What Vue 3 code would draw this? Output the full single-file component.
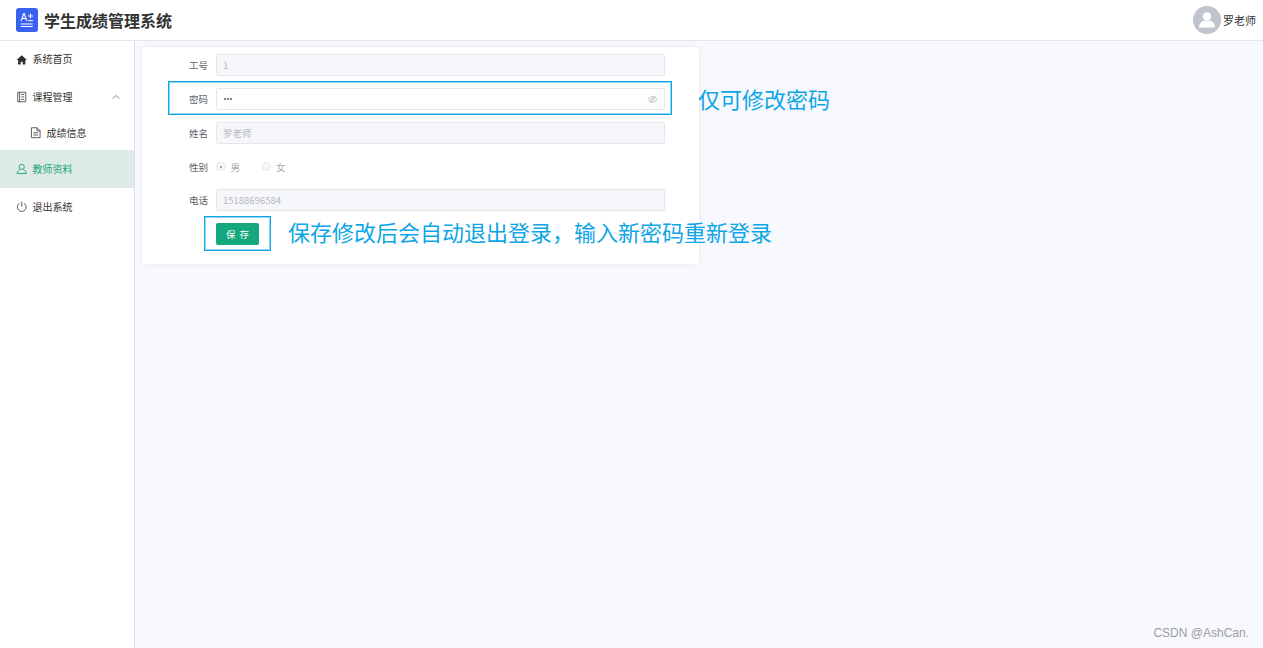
<template>
  <div class="layout">
    <header class="topbar">
      <div class="brand">
        <svg class="logo" viewBox="0 0 22 24">
          <rect width="22" height="24" rx="3" fill="#3861f0" />
          <text x="4.500" y="12.800" class="logo-a">A</text>
          <path d="M12 12.700h5M14.500 5.500v5M12 8h5M4.700 16h12M4.700 18.500h12" stroke="#fff" stroke-width="1" fill="none" />
        </svg>
        <span class="brand-name">学生成绩管理系统</span>
      </div>
      <div class="user">
        <svg class="avatar" viewBox="0 0 28 28">
          <circle cx="14" cy="14" r="14" fill="#c0c4cc" />
          <circle cx="14" cy="10.500" r="4.200" fill="#fff" />
          <path d="M6 21.500c0-4.500 3.200-6.500 5.200-7 1.800 1 3.800 1 5.600 0 2 .5 5.200 2.500 5.200 7z" fill="#fff" />
        </svg>
        <span>罗老师</span>
      </div>
    </header>

    <div class="body">
      <aside class="sidebar">
        <div v-for="item in menu" :key="item.name" class="menu-item" :class="item.cls">
          <svg class="menu-icon" viewBox="0 0 12 12" v-html="item.icon"></svg>
          <span class="menu-text">{{ item.name }}</span>
          <svg v-if="item.arrow" class="arrow" viewBox="0 0 10 10">
            <path d="M1.500 6.500 5 3.500l3.500 3" fill="none" stroke="#777" stroke-width=".8" />
          </svg>
        </div>
      </aside>

      <main class="main">
        <div class="card">
          <div class="row">
            <label>工号</label>
            <div class="input disabled">1</div>
          </div>
          <div class="row">
            <label>密码</label>
            <div class="input password">
              <span class="dots"><i></i><i></i><i></i></span>
              <svg class="eye" viewBox="0 0 12 12">
                <path d="M1 6c1.500-2.300 3-3.300 5-3.300s3.500 1 5 3.300c-1.500 2.300-3 3.300-5 3.300S2.500 8.300 1 6z" fill="none" stroke="#b4b6bb" stroke-width=".9" />
                <circle cx="6" cy="6" r="1.800" fill="none" stroke="#b4b6bb" stroke-width=".9" />
                <path d="M3 9.500 9 2.500" stroke="#b4b6bb" stroke-width=".8" />
              </svg>
            </div>
          </div>
          <div class="row">
            <label>姓名</label>
            <div class="input disabled">罗老师</div>
          </div>
          <div class="row radio-row">
            <label>性别</label>
            <div class="radios">
              <span class="radio checked"><i></i>男</span>
              <span class="radio"><i></i>女</span>
            </div>
          </div>
          <div class="row">
            <label>电话</label>
            <div class="input disabled">15188696584</div>
          </div>
          <div class="actions">
            <button class="save">保 存</button>
          </div>

          <div class="mark mark-pwd"></div>
          <div class="mark mark-save"></div>
          <span class="note note-pwd">仅可修改密码</span>
          <span class="note note-save">保存修改后会自动退出登录，输入新密码重新登录</span>
        </div>
      </main>
    </div>

    <span class="watermark">CSDN @AshCan.</span>
  </div>
</template>

<script setup>
const menu = [
  {
    name: '系统首页',
    cls: 'first',
    icon: '<path d="M6 1.300.6 6.200h1.600V11h2.800V8h2v3h2.800V6.200h1.600z" fill="#2f2f2f"/>'
  },
  {
    name: '课程管理',
    arrow: true,
    icon: '<path d="M1.800 1.300h8.400v9.900H1.800zM3.800 1.300v9.900M5.500 3.600h3M5.500 6.200h3M5.500 8.800h3" fill="none" stroke="#444" stroke-width=".9"/>'
  },
  {
    name: '成绩信息',
    cls: 'sub',
    icon: '<path d="M1.500.8h6l3 3v7.400h-9zM7.300.8v3.200h3.200M3.500 6h5M3.500 8.300h5" fill="none" stroke="#444" stroke-width=".9"/>'
  },
  {
    name: '教师资料',
    cls: 'active',
    icon: '<circle cx="6" cy="4" r="2.700" fill="none" stroke="#25a580" stroke-width="1"/><path d="M1.200 11c.3-2.700 2-3.900 3-4.200M10.800 11c-.3-2.700-2-3.900-3-4.200M1.200 11h9.600" fill="none" stroke="#25a580" stroke-width="1"/>'
  },
  {
    name: '退出系统',
    icon: '<path d="M3.700 2.300a4.600 4.600 0 1 0 4.600 0M6 .8v5" fill="none" stroke="#444" stroke-width=".9"/>'
  }
]
</script>

<style>
html,
body {
  margin: 0;
  overflow: hidden;
}
</style>

<style scoped>
.layout {
  width: 1263px;
  height: 648px;
  display: flex;
  flex-direction: column;
  position: relative;
  font-family: "Noto Sans CJK SC", "Liberation Sans", sans-serif;
  color: #333;
  background: #fff;
}

.topbar {
  height: 40px;
  flex: none;
  display: flex;
  align-items: center;
  justify-content: space-between;
  padding: 0 7px 0 16px;
  border-bottom: 1px solid #e4e6ea;
}

.brand {
  display: flex;
  align-items: center;
  gap: 6px;
}

.logo {
  width: 22px;
  height: 24px;
}

.logo-a {
  font-size: 10px;
  fill: #fff;
  font-family: "Liberation Sans", sans-serif;
}

.brand-name {
  font-size: 16px;
  font-weight: 700;
  color: #333;
}

.user {
  display: flex;
  align-items: center;
  gap: 2px;
  font-size: 11px;
}

.avatar {
  width: 28px;
  height: 28px;
}

.body {
  flex: 1;
  display: flex;
  min-height: 0;
}

.sidebar {
  width: 134px;
  flex: none;
  border-right: 1px solid #dcdfe6;
  background: #fff;
}

.menu-item {
  height: 38px;
  display: flex;
  align-items: center;
  padding-left: 16px;
  gap: 5px;
  font-size: 10px;
  color: #333;
}

.menu-text {
  padding-bottom: 2px;
}

.menu-item.first {
  height: 37px;
}

.menu-item.sub {
  height: 34px;
  padding-left: 30px;
}

.menu-item.active {
  background: #dcebe6;
  color: #25a580;
}

.menu-icon {
  width: 11.500px;
  height: 11.500px;
  flex: none;
}

.arrow {
  width: 10px;
  height: 10px;
  margin-left: auto;
  margin-right: 13px;
}

.main {
  flex: 1;
  background: #f8f9fe;
  padding: 6px 7px;
  border-bottom-right-radius: 4px;
}

.card {
  width: 557px;
  height: 217px;
  box-sizing: border-box;
  padding-top: 7px;
  background: #fff;
  border-radius: 4px;
  box-shadow: 0 0 6px rgba(0, 0, 0, 0.08);
  position: relative;
}

.row {
  display: flex;
  align-items: center;
  height: 22px;
  margin-bottom: 12px;
}

.radio-row {
  height: 21px;
}

.row label {
  width: 66px;
  text-align: right;
  margin-right: 8px;
  font-size: 9.500px;
  color: #606266;
}

.input {
  width: 449px;
  height: 22px;
  box-sizing: border-box;
  border: 1px solid #e4e7ed;
  border-radius: 2px;
  padding: 0 6px;
  display: flex;
  align-items: center;
  font-size: 9.500px;
}

.input.disabled {
  background: #f5f7fa;
  color: #b5b8bf;
}

.password {
  justify-content: space-between;
}

.dots {
  display: flex;
  gap: 1.200px;
  padding-left: 1px;
}

.dots i {
  width: 2px;
  height: 2px;
  border-radius: 50%;
  background: #555;
}

.eye {
  width: 11px;
  height: 11px;
}

.radios {
  display: flex;
  gap: 21.500px;
}

.radio {
  display: flex;
  align-items: center;
  gap: 5px;
  font-size: 9.500px;
  color: #a8abb2;
}

.radio i {
  width: 9.500px;
  height: 9.500px;
  box-sizing: border-box;
  border: 1px solid #e4e7ed;
  border-radius: 50%;
  background: #f5f7fa;
  position: relative;
}

.radio.checked i::after {
  content: "";
  position: absolute;
  left: 2.750px;
  top: 2.750px;
  width: 2px;
  height: 2px;
  border-radius: 50%;
  background: #8a8d93;
}

.actions {
  display: flex;
  padding-left: 74px;
}

.save {
  width: 43px;
  height: 22px;
  padding: 0;
  border: none;
  border-radius: 2px;
  background: #15a87c;
  color: #fff;
  font-size: 9.500px;
  word-spacing: 2px;
  font-family: inherit;
}

.mark {
  position: absolute;
  box-sizing: border-box;
  border: 1px solid #0ea6e6;
  box-shadow: inset 0 0 0 1px rgba(14, 166, 230, 0.45);
}

.mark-pwd {
  left: 26px;
  top: 34px;
  width: 504px;
  height: 34px;
}

.mark-save {
  left: 62px;
  top: 169px;
  width: 67px;
  height: 35px;
}

.note {
  position: absolute;
  font-size: 22px;
  line-height: 30px;
  color: #0ea6e6;
  white-space: nowrap;
}

.note-pwd {
  left: 556px;
  top: 36px;
}

.note-save {
  left: 146px;
  top: 169px;
}

.watermark {
  position: absolute;
  right: 14px;
  bottom: 8px;
  font-size: 12px;
  color: #9a9ca3;
  font-family: "Liberation Sans", sans-serif;
}
</style>
